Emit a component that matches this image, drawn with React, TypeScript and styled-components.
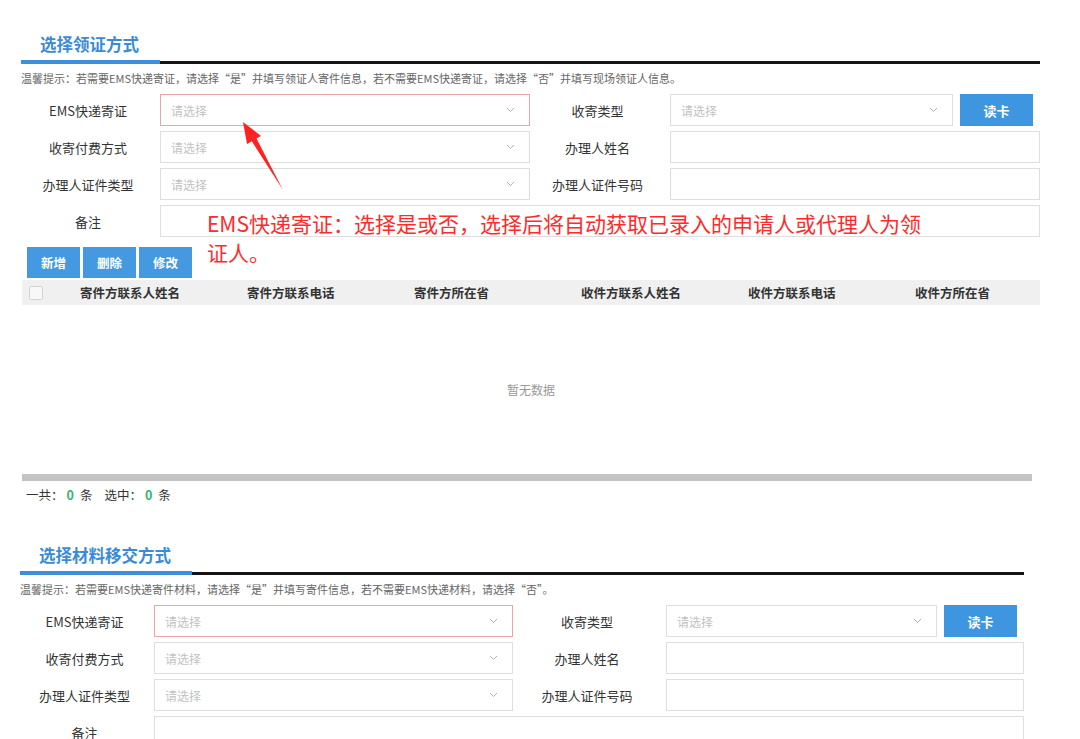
import React from 'react'
import styled, { createGlobalStyle } from 'styled-components'

const GlobalStyle = createGlobalStyle`
  body {
    margin: 0;
    background: #fff;
    color: #333;
    font-family: "Noto Sans CJK SC", "Noto Sans", "Liberation Sans", sans-serif;
  }
`

const Page = styled.div`
  height: 739px;
  overflow: hidden;
  padding-top: 33px;
  box-sizing: border-box;
`

const Section = styled.section<{ $left: number; $width: number; $gapTop?: number }>`
  margin-left: ${({ $left }) => $left}px;
  margin-top: ${({ $gapTop }) => $gapTop ?? 0}px;
  width: ${({ $width }) => $width}px;
`

const SectionHeader = styled.div`
  display: flex;
  align-items: flex-end;
`

const SectionTitle = styled.h2`
  margin: 0;
  padding: 0 21px 5px 19px;
  font-size: 16.5px;
  line-height: 22px;
  font-weight: 700;
  color: #3a8ad6;
  border-bottom: 4px solid #3d8fdc;
  white-space: nowrap;
`

const HeaderRule = styled.div`
  flex: 1;
  border-bottom: 3px solid #141414;
`

const Hint = styled.div`
  margin-top: 6px;
  font-size: 11px;
  line-height: 16px;
  color: #666;
  white-space: nowrap;
`

const FormGrid = styled.div<{ $columns: string }>`
  position: relative;
  margin-top: 8px;
  display: grid;
  grid-template-columns: ${({ $columns }) => $columns};
  grid-auto-rows: 32px;
  row-gap: 5px;
`

const FieldLabel = styled.div`
  display: flex;
  align-items: center;
  justify-content: center;
  padding-right: 5px;
  font-size: 13px;
  color: #333;
  white-space: nowrap;
`

const SelectBox = styled.div<{ $invalid?: boolean }>`
  flex: 1;
  display: flex;
  align-items: center;
  justify-content: space-between;
  padding: 0 14px 0 10px;
  box-sizing: border-box;
  border: 1px solid ${({ $invalid }) => ($invalid ? '#eaa5a8' : '#dedede')};
  background: #fff;
  font-size: 12px;
  color: #c2c2c2;
`

const TextBox = styled.div<{ $span?: boolean }>`
  border: 1px solid #dedede;
  background: #fff;
  grid-column: ${({ $span }) => ($span ? '2 / 5' : 'auto')};
`

const FieldWithButton = styled.div`
  display: flex;
  gap: 7px;
  padding-right: 7px;
`

const ReadCardButton = styled.button`
  width: 73px;
  border: none;
  background: #3f96e0;
  color: #fff;
  font-family: inherit;
  font-size: 13px;
  font-weight: 700;
  padding: 0;
`

const Annotation = styled.div`
  position: absolute;
  left: 186px;
  top: 115px;
  width: 722px;
  font-size: 21px;
  line-height: 29px;
  color: #ff2b2b;
  pointer-events: none;
`

const ArrowMark = styled.svg`
  position: absolute;
  left: 215px;
  top: 22px;
`

const Toolbar = styled.div`
  margin-top: 10px;
  padding-left: 6px;
  display: flex;
  gap: 3px;
`

const ToolButton = styled.button`
  width: 53px;
  height: 31px;
  border: none;
  padding: 0;
  background: #4499e0;
  color: #fff;
  font-family: inherit;
  font-size: 12.5px;
  font-weight: 700;
`

const Table = styled.div`
  margin-top: 2px;
  margin-left: 1px;
  width: 1018px;
  overflow: hidden;
`

const TableHead = styled.div`
  display: flex;
  align-items: center;
  height: 25px;
  background: #f0f0f0;
`

const CheckCell = styled.div`
  flex: 0 0 30px;
  padding-left: 7px;
  box-sizing: border-box;
`

const Checkbox = styled.span`
  display: block;
  width: 14px;
  height: 14px;
  box-sizing: border-box;
  border: 1px solid #d2d2d2;
  border-radius: 2px;
  background: #f8f8f8;
`

const HeadCell = styled.div`
  flex: 0 0 167px;
  padding-left: 28px;
  box-sizing: border-box;
  font-size: 12.5px;
  font-weight: 700;
  color: #333;
  white-space: nowrap;
`

const EmptyBody = styled.div`
  height: 169px;
  display: flex;
  align-items: center;
  justify-content: center;
  font-size: 12px;
  color: #999;
`

const ScrollTrack = styled.div`
  width: 1010px;
  height: 7px;
  background: #c3c3c3;
`

const Footer = styled.div`
  margin-top: 5px;
  padding-left: 5px;
  font-size: 12.5px;
  line-height: 18px;
  color: #333;
`

const Count = styled.b`
  color: #35b56b;
  margin: 0 6px 0 3px;
`

const FooterGap = styled.span`
  display: inline-block;
  width: 12px;
`

function Chevron() {
  return (
    <svg width="9" height="6" viewBox="0 0 9 6">
      <polyline points="1,1 4.5,4.5 8,1" fill="none" stroke="#b0b0b0" strokeWidth="1" />
    </svg>
  )
}

function Select({ invalid }: { invalid?: boolean }) {
  return (
    <SelectBox $invalid={invalid}>
      <span>请选择</span>
      <Chevron />
    </SelectBox>
  )
}

const columns = ['寄件方联系人姓名', '寄件方联系电话', '寄件方所在省', '收件方联系人姓名', '收件方联系电话', '收件方所在省']

function DeliveryForm({ columns, children }: { columns: string; children?: React.ReactNode }) {
  return (
    <FormGrid $columns={columns}>
      <FieldLabel>EMS快递寄证</FieldLabel>
      <Select invalid />
      <FieldLabel>收寄类型</FieldLabel>
      <FieldWithButton>
        <Select />
        <ReadCardButton>读卡</ReadCardButton>
      </FieldWithButton>

      <FieldLabel>收寄付费方式</FieldLabel>
      <Select />
      <FieldLabel>办理人姓名</FieldLabel>
      <TextBox />

      <FieldLabel>办理人证件类型</FieldLabel>
      <Select />
      <FieldLabel>办理人证件号码</FieldLabel>
      <TextBox />

      <FieldLabel>备注</FieldLabel>
      <TextBox $span />
      {children}
    </FormGrid>
  )
}

export default function App() {
  return (
    <Page>
      <GlobalStyle />

      <Section $left={21} $width={1019}>
        <SectionHeader>
          <SectionTitle>选择领证方式</SectionTitle>
          <HeaderRule />
        </SectionHeader>
        <Hint>
          温馨提示：若需要EMS快递寄证，请选择“是”并填写领证人寄件信息，若不需要EMS快递寄证，请选择“否”并填写现场领证人信息。
        </Hint>
        <DeliveryForm columns="139px 370px 140px 370px">
          <Annotation>EMS快递寄证：选择是或否，选择后将自动获取已录入的申请人或代理人为领证人。</Annotation>
          <ArrowMark width="55" height="82" viewBox="0 0 55 82">
            <polygon points="7,6 25,20 20.5,22.5 47,74 15.8,25.2 11,28" fill="#ff2222" />
          </ArrowMark>
        </DeliveryForm>

        <Toolbar>
          <ToolButton>新增</ToolButton>
          <ToolButton>删除</ToolButton>
          <ToolButton>修改</ToolButton>
        </Toolbar>

        <Table>
          <TableHead>
            <CheckCell>
              <Checkbox />
            </CheckCell>
            {columns.map(c => (
              <HeadCell key={c}>{c}</HeadCell>
            ))}
          </TableHead>
          <EmptyBody>暂无数据</EmptyBody>
          <ScrollTrack />
        </Table>

        <Footer>
          一共：<Count>0</Count>条<FooterGap />选中：<Count>0</Count>条
        </Footer>
      </Section>

      <Section $left={20} $width={1004} $gapTop={40}>
        <SectionHeader>
          <SectionTitle>选择材料移交方式</SectionTitle>
          <HeaderRule />
        </SectionHeader>
        <Hint>温馨提示：若需要EMS快递寄件材料，请选择“是”并填写寄件信息，若不需要EMS快递材料，请选择“否”。</Hint>
        <DeliveryForm columns="134px 359px 153px 358px" />
      </Section>
    </Page>
  )
}
